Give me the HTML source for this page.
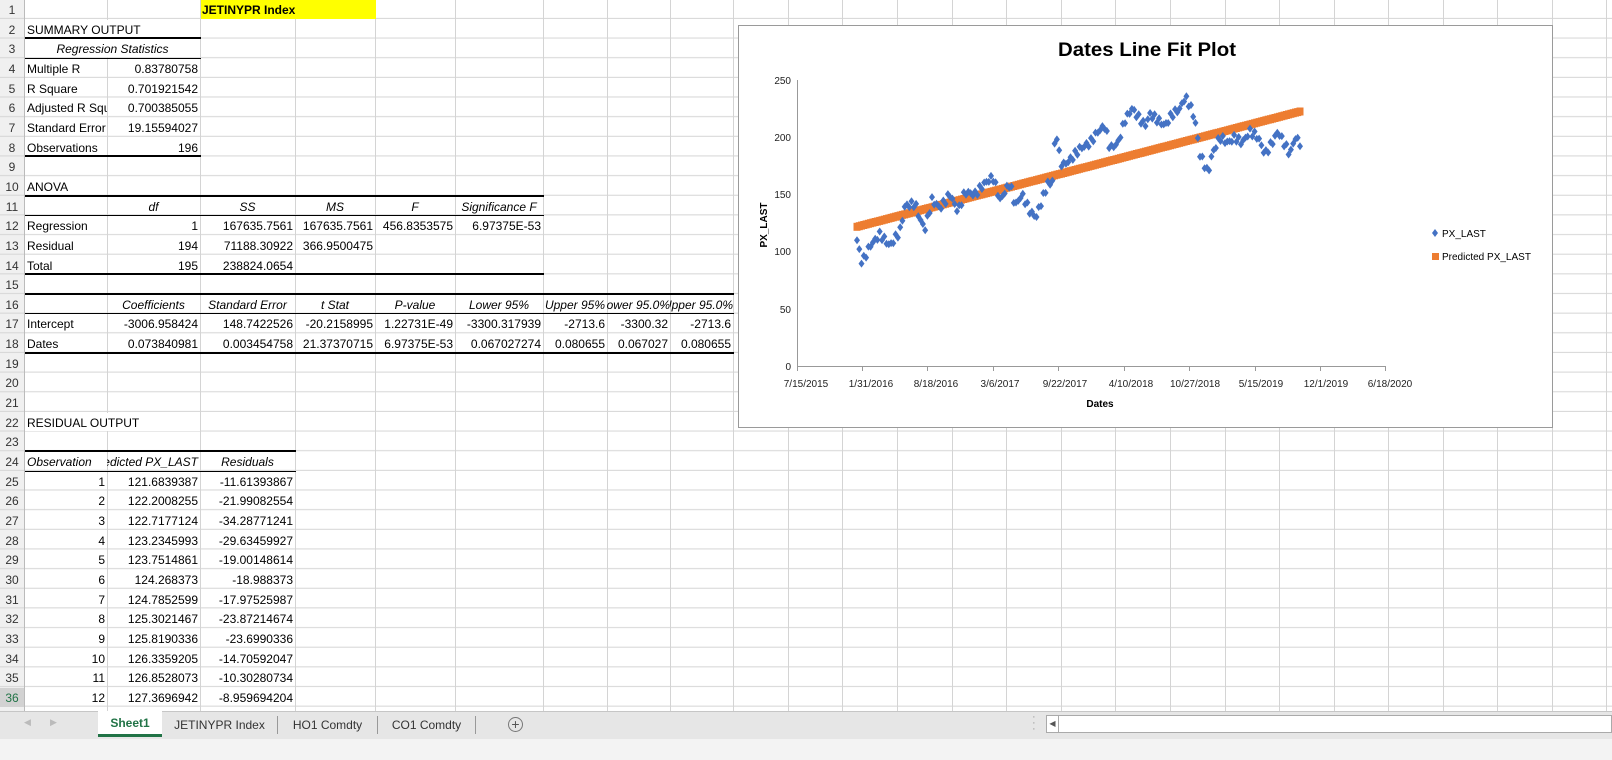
<!DOCTYPE html>
<html><head><meta charset="utf-8"><style>
*{margin:0;padding:0;box-sizing:border-box}
body{width:1612px;height:760px;overflow:hidden;background:#fff;font-family:"Liberation Sans",sans-serif;font-size:12px;color:#000;position:relative}
.c{position:absolute;height:19px;line-height:20px;white-space:nowrap;overflow:hidden;padding:0 2px}
.w{background:#fff;height:18px}
.r{text-align:right}.m{text-align:center}.i{font-style:italic}
.rh{position:absolute;left:0;width:24px;height:19px;line-height:20px;text-align:center;color:#333;font-size:12px}
.hl{position:absolute;background:#000}
</style></head><body>
<svg width="1612" height="712" style="position:absolute;left:0;top:0">
<defs><pattern id="rw" x="0" y="-0.65" width="1612" height="19.65" patternUnits="userSpaceOnUse"><line x1="0" y1="19" x2="1612" y2="19" stroke="#d4d4d4" stroke-width="1"/></pattern></defs>
<rect x="0" y="0" width="24" height="712" fill="#f0f0f0"/>
<rect x="0" y="0" width="1612" height="712" fill="url(#rw)"/>
<g stroke="#d4d4d4" stroke-width="1">
<line x1="24.5" y1="0" x2="24.5" y2="712" stroke="#bbb"/>
<line x1="107.5" y1="0" x2="107.5" y2="712"/><line x1="200.5" y1="0" x2="200.5" y2="712"/><line x1="295.5" y1="0" x2="295.5" y2="712"/><line x1="375.5" y1="0" x2="375.5" y2="712"/><line x1="455.5" y1="0" x2="455.5" y2="712"/><line x1="543.5" y1="0" x2="543.5" y2="712"/><line x1="607.5" y1="0" x2="607.5" y2="712"/><line x1="670.5" y1="0" x2="670.5" y2="712"/><line x1="733.5" y1="0" x2="733.5" y2="712"/><line x1="788.5" y1="0" x2="788.5" y2="712"/><line x1="842.5" y1="0" x2="842.5" y2="712"/><line x1="897.5" y1="0" x2="897.5" y2="712"/><line x1="952.5" y1="0" x2="952.5" y2="712"/><line x1="1006.5" y1="0" x2="1006.5" y2="712"/><line x1="1061.5" y1="0" x2="1061.5" y2="712"/><line x1="1115.5" y1="0" x2="1115.5" y2="712"/><line x1="1170.5" y1="0" x2="1170.5" y2="712"/><line x1="1225.5" y1="0" x2="1225.5" y2="712"/><line x1="1279.5" y1="0" x2="1279.5" y2="712"/><line x1="1334.5" y1="0" x2="1334.5" y2="712"/><line x1="1388.5" y1="0" x2="1388.5" y2="712"/><line x1="1443.5" y1="0" x2="1443.5" y2="712"/><line x1="1497.5" y1="0" x2="1497.5" y2="712"/><line x1="1552.5" y1="0" x2="1552.5" y2="712"/><line x1="1606.5" y1="0" x2="1606.5" y2="712"/>
</g>
<rect x="22" y="688" width="2" height="19" fill="#217346"/>
</svg>
<div style="position:absolute;left:201px;top:0;width:175px;height:19px;background:#ffff00"></div>
<div class="rh" style="top:0">1</div><div class="rh" style="top:19.65px">2</div><div class="rh" style="top:39.3px">3</div><div class="rh" style="top:59px">4</div><div class="rh" style="top:78.6px">5</div><div class="rh" style="top:98.3px">6</div><div class="rh" style="top:117.9px">7</div><div class="rh" style="top:137.6px">8</div><div class="rh" style="top:157.2px">9</div><div class="rh" style="top:176.9px">10</div><div class="rh" style="top:196.5px">11</div><div class="rh" style="top:216.2px">12</div><div class="rh" style="top:235.8px">13</div><div class="rh" style="top:255.5px">14</div><div class="rh" style="top:275.1px">15</div><div class="rh" style="top:294.8px">16</div><div class="rh" style="top:314.4px">17</div><div class="rh" style="top:334.1px">18</div><div class="rh" style="top:353.7px">19</div><div class="rh" style="top:373.4px">20</div><div class="rh" style="top:393px">21</div><div class="rh" style="top:412.7px">22</div><div class="rh" style="top:432.3px">23</div><div class="rh" style="top:452px">24</div><div class="rh" style="top:471.6px">25</div><div class="rh" style="top:491.3px">26</div><div class="rh" style="top:510.9px">27</div><div class="rh" style="top:530.6px">28</div><div class="rh" style="top:550.2px">29</div><div class="rh" style="top:569.9px">30</div><div class="rh" style="top:589.5px">31</div><div class="rh" style="top:609.2px">32</div><div class="rh" style="top:628.8px">33</div><div class="rh" style="top:648.5px">34</div><div class="rh" style="top:668.1px">35</div><div class="rh" style="top:687.8px;background:#d2d2d2;color:#217346">36</div>

<div class="c" style="left:200px;top:0;width:176px;font-weight:bold">JETINYPR Index</div>
<div class="c w" style="left:25px;top:19.65px;width:175px">SUMMARY OUTPUT</div>
<div class="c m i w" style="left:25px;top:39.3px;width:175px">Regression Statistics</div>
<div class="c" style="left:25px;top:59px;width:82px">Multiple R</div><div class="c r" style="left:107px;top:59px;width:93px">0.83780758</div>
<div class="c" style="left:25px;top:78.6px;width:82px">R Square</div><div class="c r" style="left:107px;top:78.6px;width:93px">0.701921542</div>
<div class="c" style="left:25px;top:98.3px;width:82px">Adjusted R Square</div><div class="c r" style="left:107px;top:98.3px;width:93px">0.700385055</div>
<div class="c" style="left:25px;top:117.9px;width:82px">Standard Error</div><div class="c r" style="left:107px;top:117.9px;width:93px">19.15594027</div>
<div class="c" style="left:25px;top:137.6px;width:82px">Observations</div><div class="c r" style="left:107px;top:137.6px;width:93px">196</div>
<div class="c" style="left:25px;top:176.9px;width:80px">ANOVA</div>
<div class="c m i" style="left:107px;top:196.5px;width:93px">df</div><div class="c m i" style="left:200px;top:196.5px;width:95px">SS</div><div class="c m i" style="left:295px;top:196.5px;width:80px">MS</div><div class="c m i" style="left:375px;top:196.5px;width:80px">F</div><div class="c m i" style="left:455px;top:196.5px;width:88px">Significance F</div>
<div class="c" style="left:25px;top:216.2px;width:82px">Regression</div><div class="c r" style="left:107px;top:216.2px;width:93px">1</div><div class="c r" style="left:200px;top:216.2px;width:95px">167635.7561</div><div class="c r" style="left:295px;top:216.2px;width:80px">167635.7561</div><div class="c r" style="left:375px;top:216.2px;width:80px">456.8353575</div><div class="c r" style="left:455px;top:216.2px;width:88px">6.97375E-53</div>
<div class="c" style="left:25px;top:235.8px;width:82px">Residual</div><div class="c r" style="left:107px;top:235.8px;width:93px">194</div><div class="c r" style="left:200px;top:235.8px;width:95px">71188.30922</div><div class="c r" style="left:295px;top:235.8px;width:80px">366.9500475</div>
<div class="c" style="left:25px;top:255.5px;width:82px">Total</div><div class="c r" style="left:107px;top:255.5px;width:93px">195</div><div class="c r" style="left:200px;top:255.5px;width:95px">238824.0654</div>
<div class="c m i" style="left:107px;top:294.8px;width:93px">Coefficients</div><div class="c m i" style="left:200px;top:294.8px;width:95px">Standard Error</div><div class="c m i" style="left:295px;top:294.8px;width:80px">t Stat</div><div class="c m i" style="left:375px;top:294.8px;width:80px">P-value</div><div class="c m i" style="left:455px;top:294.8px;width:88px">Lower 95%</div><div class="c m i" style="left:543px;top:294.8px;width:64px;padding:0">Upper 95%</div><div class="c i" style="left:607px;top:294.8px;width:63px;padding:0;direction:rtl">Lower 95.0%</div><div class="c i" style="left:670px;top:294.8px;width:63px;padding:0;direction:rtl">Upper 95.0%</div>
<div class="c" style="left:25px;top:314.4px;width:82px">Intercept</div><div class="c r" style="left:107px;top:314.4px;width:93px">-3006.958424</div><div class="c r" style="left:200px;top:314.4px;width:95px">148.7422526</div><div class="c r" style="left:295px;top:314.4px;width:80px">-20.2158995</div><div class="c r" style="left:375px;top:314.4px;width:80px">1.22731E-49</div><div class="c r" style="left:455px;top:314.4px;width:88px">-3300.317939</div><div class="c r" style="left:543px;top:314.4px;width:64px">-2713.6</div><div class="c r" style="left:607px;top:314.4px;width:63px">-3300.32</div><div class="c r" style="left:670px;top:314.4px;width:63px">-2713.6</div>
<div class="c" style="left:25px;top:334.1px;width:82px">Dates</div><div class="c r" style="left:107px;top:334.1px;width:93px">0.073840981</div><div class="c r" style="left:200px;top:334.1px;width:95px">0.003454758</div><div class="c r" style="left:295px;top:334.1px;width:80px">21.37370715</div><div class="c r" style="left:375px;top:334.1px;width:80px">6.97375E-53</div><div class="c r" style="left:455px;top:334.1px;width:88px">0.067027274</div><div class="c r" style="left:543px;top:334.1px;width:64px">0.080655</div><div class="c r" style="left:607px;top:334.1px;width:63px">0.067027</div><div class="c r" style="left:670px;top:334.1px;width:63px">0.080655</div>
<div class="c w" style="left:25px;top:412.7px;width:175px">RESIDUAL OUTPUT</div>
<div class="c i" style="left:25px;top:452px;width:82px">Observation</div><div class="c i" style="left:107px;top:452px;width:93px;direction:rtl">Predicted PX_LAST</div><div class="c m i" style="left:200px;top:452px;width:95px">Residuals</div>

<div class="c r" style="left:25px;top:471.6px;width:82px">1</div><div class="c r" style="left:107px;top:471.6px;width:93px">121.6839387</div><div class="c r" style="left:200px;top:471.6px;width:95px">-11.61393867</div>
<div class="c r" style="left:25px;top:491.3px;width:82px">2</div><div class="c r" style="left:107px;top:491.3px;width:93px">122.2008255</div><div class="c r" style="left:200px;top:491.3px;width:95px">-21.99082554</div>
<div class="c r" style="left:25px;top:510.9px;width:82px">3</div><div class="c r" style="left:107px;top:510.9px;width:93px">122.7177124</div><div class="c r" style="left:200px;top:510.9px;width:95px">-34.28771241</div>
<div class="c r" style="left:25px;top:530.6px;width:82px">4</div><div class="c r" style="left:107px;top:530.6px;width:93px">123.2345993</div><div class="c r" style="left:200px;top:530.6px;width:95px">-29.63459927</div>
<div class="c r" style="left:25px;top:550.2px;width:82px">5</div><div class="c r" style="left:107px;top:550.2px;width:93px">123.7514861</div><div class="c r" style="left:200px;top:550.2px;width:95px">-19.00148614</div>
<div class="c r" style="left:25px;top:569.9px;width:82px">6</div><div class="c r" style="left:107px;top:569.9px;width:93px">124.268373</div><div class="c r" style="left:200px;top:569.9px;width:95px">-18.988373</div>
<div class="c r" style="left:25px;top:589.5px;width:82px">7</div><div class="c r" style="left:107px;top:589.5px;width:93px">124.7852599</div><div class="c r" style="left:200px;top:589.5px;width:95px">-17.97525987</div>
<div class="c r" style="left:25px;top:609.2px;width:82px">8</div><div class="c r" style="left:107px;top:609.2px;width:93px">125.3021467</div><div class="c r" style="left:200px;top:609.2px;width:95px">-23.87214674</div>
<div class="c r" style="left:25px;top:628.8px;width:82px">9</div><div class="c r" style="left:107px;top:628.8px;width:93px">125.8190336</div><div class="c r" style="left:200px;top:628.8px;width:95px">-23.6990336</div>
<div class="c r" style="left:25px;top:648.5px;width:82px">10</div><div class="c r" style="left:107px;top:648.5px;width:93px">126.3359205</div><div class="c r" style="left:200px;top:648.5px;width:95px">-14.70592047</div>
<div class="c r" style="left:25px;top:668.1px;width:82px">11</div><div class="c r" style="left:107px;top:668.1px;width:93px">126.8528073</div><div class="c r" style="left:200px;top:668.1px;width:95px">-10.30280734</div>
<div class="c r" style="left:25px;top:687.8px;width:82px">12</div><div class="c r" style="left:107px;top:687.8px;width:93px">127.3696942</div><div class="c r" style="left:200px;top:687.8px;width:95px">-8.959694204</div>

<div class="hl" style="left:25px;top:37px;width:176px;height:2px"></div>
<div class="hl" style="left:25px;top:58px;width:176px;height:1px"></div>
<div class="hl" style="left:25px;top:155px;width:176px;height:2px"></div>
<div class="hl" style="left:25px;top:195px;width:519px;height:2px"></div>
<div class="hl" style="left:25px;top:215px;width:519px;height:1px"></div>
<div class="hl" style="left:25px;top:273px;width:519px;height:2px"></div>
<div class="hl" style="left:25px;top:293px;width:709px;height:2px"></div>
<div class="hl" style="left:25px;top:313px;width:709px;height:1px"></div>
<div class="hl" style="left:25px;top:352px;width:709px;height:2px"></div>
<div class="hl" style="left:25px;top:450px;width:271px;height:2px"></div>
<div class="hl" style="left:25px;top:471px;width:271px;height:1px"></div>

<div style="position:absolute;left:738px;top:25px;width:815px;height:403px;background:#fff;border:1px solid #9a9a9a"></div>
<svg id="ch" width="815" height="403" style="position:absolute;left:738px;top:25px" font-family="Liberation Sans, sans-serif">
<text x="409" y="31" font-size="19" font-weight="bold" text-anchor="middle" textLength="178" lengthAdjust="spacingAndGlyphs">Dates Line Fit  Plot</text>
<g font-size="10" fill="#222" text-anchor="end">
<text x="53" y="59">250</text><text x="53" y="116">200</text><text x="53" y="173">150</text><text x="53" y="230">100</text><text x="53" y="288">50</text><text x="53" y="345">0</text>
</g>
<line x1="59.5" y1="55" x2="59.5" y2="342" stroke="#999"/>
<line x1="59" y1="341.5" x2="648" y2="341.5" stroke="#999"/>
<g stroke="#999"><line x1="59.5" y1="341" x2="59.5" y2="346"/><line x1="124.5" y1="341" x2="124.5" y2="346"/><line x1="189.5" y1="341" x2="189.5" y2="346"/><line x1="255.5" y1="341" x2="255.5" y2="346"/><line x1="320.5" y1="341" x2="320.5" y2="346"/><line x1="386.5" y1="341" x2="386.5" y2="346"/><line x1="451.5" y1="341" x2="451.5" y2="346"/><line x1="517.5" y1="341" x2="517.5" y2="346"/><line x1="582.5" y1="341" x2="582.5" y2="346"/><line x1="647.5" y1="341" x2="647.5" y2="346"/></g>
<g font-size="10" fill="#222" text-anchor="middle">
<text x="68" y="362">7/15/2015</text><text x="133" y="362">1/31/2016</text><text x="198" y="362">8/18/2016</text><text x="262" y="362">3/6/2017</text><text x="327" y="362">9/22/2017</text><text x="393" y="362">4/10/2018</text><text x="457" y="362">10/27/2018</text><text x="523" y="362">5/15/2019</text><text x="588" y="362">12/1/2019</text><text x="652" y="362">6/18/2020</text>
</g>
<text x="362" y="382" font-size="10" font-weight="bold" text-anchor="middle">Dates</text>
<text transform="translate(29,200) rotate(-90)" font-size="10" font-weight="bold" text-anchor="middle">PX_LAST</text>
<path d="M697 204 l3 4 l-3 4 l-3 -4z" fill="#4472C4"/>
<text x="704" y="212" font-size="10">PX_LAST</text>
<rect x="694" y="228" width="7" height="7" fill="#ED7D31"/>
<text x="704" y="235" font-size="10">Predicted PX_LAST</text>
<g id="pts"></g>
</svg>
<script>
(function(){
var k=[[857,110],[862,90],[870,105],[880,115],[890,105],[900,118],[905,140],[915,142],[920,128],[925,120],[932,145],[940,138],[950,150],[958,135],[965,152],[975,150],[985,160],[993,165],[1000,145],[1010,160],[1015,140],[1022,150],[1030,135],[1036,130],[1042,145],[1048,160],[1052,158],[1056,210],[1058,190],[1062,175],[1070,180],[1080,190],[1090,195],[1098,205],[1105,210],[1110,190],[1118,195],[1125,215],[1132,225],[1138,218],[1145,210],[1150,220],[1158,215],[1165,210],[1172,220],[1180,225],[1185,235],[1190,228],[1195,215],[1200,185],[1205,175],[1208,168],[1212,185],[1220,200],[1228,195],[1235,200],[1242,195],[1250,205],[1258,200],[1265,185],[1272,195],[1278,205],[1284,195],[1290,185],[1295,200],[1300,195]];
var g=document.getElementById("pts"),s="",line="";
function Y(v){return 341-v*1.144;}
for(var i=0;i<196;i++){var x=857+i*443/195;var v=121.7+i*0.5169;line+='<rect x="'+(x-738-3.5).toFixed(1)+'" y="'+(Y(v)-4).toFixed(1)+'" width="7" height="8" fill="#ED7D31"/>';}
for(var i=0;i<196;i++){var x=857+i*443/195;var j=0;while(j<k.length-2&&k[j+1][0]<x)j++;var a=k[j],b=k[j+1];var t=(x-a[0])/(b[0]-a[0]);var v=a[1]+(b[1]-a[1])*t+Math.sin(i*2.7)*3;var px=x-738,py=Y(v);s+='<path d="M'+px.toFixed(1)+' '+(py-4).toFixed(1)+'l3 4l-3 4l-3 -4z" fill="#4472C4"/>';}
g.innerHTML=line+s;
})();
</script>

<div style="position:absolute;left:0;top:711px;width:1612px;height:28px;background:#e6e6e6;border-top:1px solid #c6c6c6"></div>
<div style="position:absolute;left:0;top:739px;width:1612px;height:21px;background:#f3f3f3"></div>
<div style="position:absolute;left:24px;top:717px;color:#bbb;font-size:9px">&#9664;</div>
<div style="position:absolute;left:50px;top:717px;color:#bbb;font-size:9px">&#9654;</div>
<div style="position:absolute;left:98px;top:711px;width:64px;height:26px;background:#fff;border-bottom:3px solid #217346;color:#217346;font-weight:bold;text-align:center;line-height:25px;font-size:12px">Sheet1</div>
<div style="position:absolute;left:162px;top:716px;width:116px;height:18px;line-height:18px;text-align:center;color:#333;font-size:12px;border-right:1px solid #999">JETINYPR Index</div>
<div style="position:absolute;left:278px;top:716px;width:100px;height:18px;line-height:18px;text-align:center;color:#333;font-size:12px;border-right:1px solid #999">HO1 Comdty</div>
<div style="position:absolute;left:378px;top:716px;width:98px;height:18px;line-height:18px;text-align:center;color:#333;font-size:12px;border-right:1px solid #999">CO1 Comdty</div>
<div style="position:absolute;left:508px;top:717px;width:15px;height:15px;border:1px solid #777;border-radius:50%;text-align:center;line-height:13px;color:#555;font-size:14px">+</div>
<div style="position:absolute;left:1032px;top:714px;color:#999;font-size:11px;line-height:6px">·<br>·<br>·</div>
<div style="position:absolute;left:1046px;top:715px;width:566px;height:18px;background:#fff;border:1px solid #aaa"></div>
<div style="position:absolute;left:1046px;top:715px;width:13px;height:18px;border:1px solid #aaa;font-size:8px;text-align:center;line-height:16px;color:#555">&#9664;</div>
</body></html>
